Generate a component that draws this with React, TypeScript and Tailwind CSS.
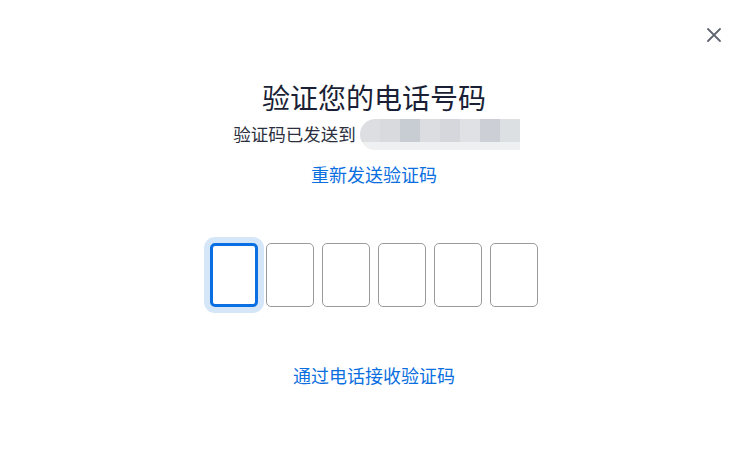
import React from "react";

const blocks = ["#dcdee2", "#d8dade", "#c8ccd3", "#dcdde1", "#d5d7dc", "#dfe1e5", "#ccd0d6", "#dde0e3"];

export default function App() {
  return (
    <div
      className="relative w-[751px] h-[453px] bg-white overflow-hidden"
      style={{ fontFamily: '"Noto Sans CJK SC", "Noto Sans", sans-serif' }}
    >
      <button className="absolute left-[706px] top-[27px] w-[16px] h-[16px] flex items-center justify-center">
        <svg width="16" height="16" viewBox="0 0 16 16">
          <path d="M2 2 L14 14 M14 2 L2 14" stroke="#5f6470" strokeWidth="1.8" strokeLinecap="round" />
        </svg>
      </button>
      <div className="flex flex-col items-center pt-[77px] pr-[3px]">
        <div className="h-[40px] leading-[40px] text-[28px] text-[#1a1f36]">验证您的电话号码</div>
        <div className="mt-[1px] ml-[5px] flex items-center h-[32px]">
          <span className="text-[17.5px] leading-[32px] text-[#2b2f3d]">验证码已发送到</span>
          <div className="ml-[4px] w-[160px] h-[31px] rounded-l-[16px] overflow-hidden flex flex-col">
            <div className="flex h-[23px]">
              {blocks.map((c, i) => (
                <div key={i} className="w-[20px] h-full" style={{ backgroundColor: c }} />
              ))}
            </div>
            <div className="h-[8px] bg-[#eff0f2]" />
          </div>
        </div>
        <a className="mt-[11px] text-[18px] leading-[26px] text-[#0b6fe0] cursor-pointer">重新发送验证码</a>
        <div className="mt-[56px] flex gap-[8px]">
          <div className="w-[48px] h-[64px] rounded-[5px] border-[3px] border-[#0a6fe3] shadow-[0_0_0_6px_#d5e6f8]" />
          {[0, 1, 2, 3, 4].map((i) => (
            <div key={i} className="w-[48px] h-[64px] rounded-[5px] border border-[#9b9b9b]" />
          ))}
        </div>
        <a className="mt-[55px] text-[18px] leading-[26px] text-[#0b6fe0] cursor-pointer">通过电话接收验证码</a>
      </div>
    </div>
  );
}
